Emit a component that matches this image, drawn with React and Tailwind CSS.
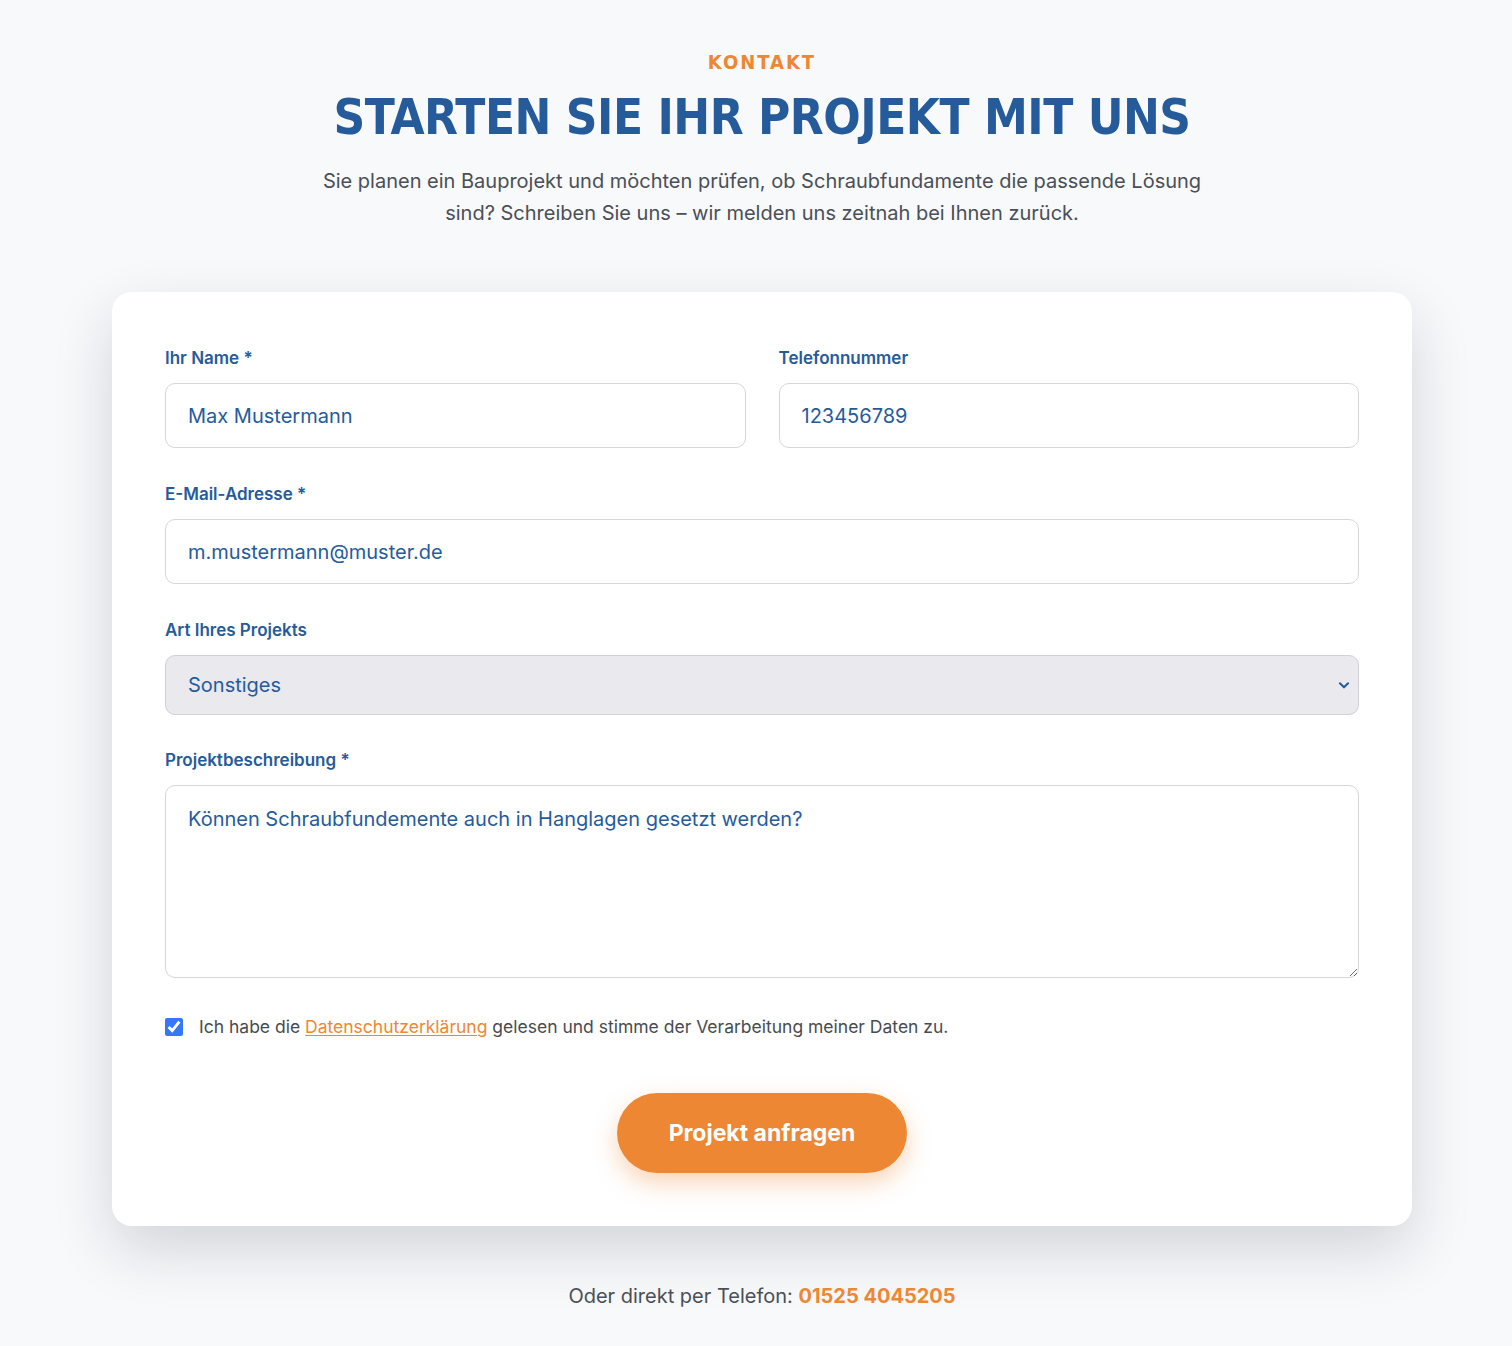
import { useState } from "react";

const BLUE = "text-[#265b9b]";

const Label = ({ children }) => (
  <label className={`block text-[17px] leading-6 font-semibold ${BLUE} mb-[13px]`}>{children}</label>
);

const inputCls =
  "block w-full h-[65px] rounded-[10px] border border-[#d4d6da] bg-white px-[22px] text-[20px] text-[#265b9b] outline-none";

export default function App() {
  const [agreed, setAgreed] = useState(true);

  return (
    <div
      className="h-screen overflow-hidden bg-[#f8f9fb] pt-[50px] pl-[12px]"
      style={{ fontFamily: "Inter, 'Noto Sans', sans-serif" }}
    >
      {/* header */}
      <div className="flex flex-col items-center text-center">
        <p
          className="text-[20px] leading-6 font-bold tracking-[0.1em] text-[#ee8733]"
          style={{ fontFamily: "'DejaVu Sans Condensed', 'DejaVu Sans', sans-serif" }}
        >
          KONTAKT
        </p>
        <h1
          className="mt-[16px] text-[49px] leading-[56px] font-bold text-[#265b9b] tracking-[-0.01em]"
          style={{ fontFamily: "'DejaVu Sans Condensed', 'DejaVu Sans', sans-serif" }}
        >
          STARTEN SIE IHR PROJEKT MIT UNS
        </h1>
        <p className="mt-[19px] max-w-[900px] text-[20px] leading-8 text-[#4a4f57]">
          Sie planen ein Bauprojekt und möchten prüfen, ob Schraubfundamente die passende Lösung
          sind? Schreiben Sie uns – wir melden uns zeitnah bei Ihnen zurück.
        </p>
      </div>

      {/* form card */}
      <div className="mx-auto mt-[63px] w-[1300px] rounded-[20px] bg-white px-[53px] pt-[54px] pb-[53px] shadow-[0_24px_60px_rgba(15,23,42,0.16)]">
        <div className="grid grid-cols-2 gap-x-[33px]">
          <div>
            <Label>Ihr Name *</Label>
            <input className={inputCls} defaultValue="Max Mustermann" />
          </div>
          <div>
            <Label>Telefonnummer</Label>
            <input className={inputCls} defaultValue="123456789" />
          </div>
        </div>

        <div className="mt-[34px]">
          <Label>E-Mail-Adresse *</Label>
          <input className={inputCls} defaultValue="m.mustermann@muster.de" />
        </div>

        <div className="mt-[34px]">
          <Label>Art Ihres Projekts</Label>
          <div className="relative">
            <select
              className="block w-full h-[60px] appearance-none rounded-[10px] border border-[#cfd1d6] bg-[#e9e9ee] px-[22px] text-[20px] text-[#265b9b] outline-none"
              defaultValue="Sonstiges"
            >
              <option>Einfamilienhaus</option>
              <option>Carport</option>
              <option>Sonstiges</option>
            </select>
            <svg
              className="pointer-events-none absolute right-[8px] top-1/2 -translate-y-1/2"
              width="14"
              height="14"
              viewBox="0 0 24 24"
              fill="none"
              stroke="#265b9b"
              strokeWidth="3.5"
              strokeLinecap="round"
              strokeLinejoin="round"
            >
              <path d="M5 9l7 7 7-7" />
            </svg>
          </div>
        </div>

        <div className="mt-[33px]">
          <Label>Projektbeschreibung *</Label>
          <textarea
            className="block w-full h-[193px] rounded-[10px] border border-[#d4d6da] bg-white px-[22px] py-[19px] text-[20px] leading-7 text-[#265b9b] outline-none"
            defaultValue="Können Schraubfundemente auch in Hanglagen gesetzt werden?"
          />
        </div>

        <label className="mt-[36px] flex items-center gap-[16px] text-[17.5px] text-[#474b52]">
          <input
            type="checkbox"
            checked={agreed}
            onChange={(e) => setAgreed(e.target.checked)}
            className="h-[18px] w-[18px] accent-[#3478f6]"
          />
          <span>
            Ich habe die{" "}
            <a href="#" className="text-[#ee8733] underline underline-offset-2">
              Datenschutzerklärung
            </a>{" "}
            gelesen und stimme der Verarbeitung meiner Daten zu.
          </span>
        </label>

        <div className="mt-[53px] flex justify-center">
          <button className="h-[80px] w-[290px] rounded-full bg-[#ee8733] text-[23px] font-bold text-white shadow-[0_10px_24px_rgba(238,135,51,0.35)]">
            Projekt anfragen
          </button>
        </div>
      </div>

      <p className="mt-[55px] text-center text-[20px] text-[#4a4f57]">
        Oder direkt per Telefon: <span className="font-bold text-[#ee8733]">01525 4045205</span>
      </p>
    </div>
  );
}
